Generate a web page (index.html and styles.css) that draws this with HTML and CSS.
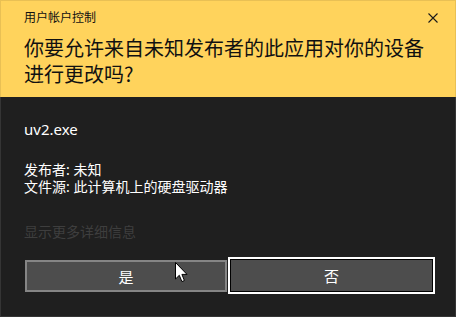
FILE: index.html
```html
<!DOCTYPE html>
<html lang="zh-CN">
<head>
<meta charset="utf-8">
<link rel="stylesheet" href="styles.css">
</head>
<body>
<div class="window">
  <header class="banner">
    <div class="titlebar">
      <span class="title">用户帐户控制</span>
      <svg class="close" width="10" height="10" viewBox="0 0 10 10"><path d="M0.5 0.5 L9.5 9.5 M9.5 0.5 L0.5 9.5" stroke="#1a1a1a" stroke-width="1.1" fill="none"/></svg>
    </div>
    <h1 class="question">你要允许来自未知发布者的此应用对你的设备进行更改吗?</h1>
  </header>
  <main class="content">
    <div class="app">uv2.exe</div>
    <div class="meta">
      <div>发布者: 未知</div>
      <div>文件源: 此计算机上的硬盘驱动器</div>
    </div>
    <div class="more">显示更多详细信息</div>
    <div class="actions">
      <button class="btn btn-yes">是</button>
      <button class="btn btn-no">否</button>
    </div>
    <svg class="cursor" width="13" height="21" viewBox="0 0 13 21"><path d="M0.5 0.5 V17 L4.3 13.3 L6.9 19.6 L9.4 18.5 L6.9 12.4 H12 Z" fill="#fff" stroke="#000" stroke-width="1" stroke-linejoin="miter"/></svg>
  </main>
</div>
</body>
</html>
```
FILE: styles.css
```css
* { box-sizing: border-box; }
html, body { margin: 0; padding: 0; }
body {
  width: 456px;
  height: 317px;
  overflow: hidden;
  background: #1f1f1f;
  font-family: "Noto Sans", "Noto Sans CJK SC", sans-serif;
}
.window {
  width: 456px;
  height: 317px;
  display: flex;
  flex-direction: column;
}
.banner {
  height: 97px;
  background: #ffd35c;
  border: 1px solid #e9c054;
  border-bottom: none;
  padding: 0 17px 0 23px;
  color: #111;
}
.titlebar {
  display: flex;
  justify-content: space-between;
  align-items: center;
  height: 32px;
}
.title {
  font-family: "Noto Sans CJK SC", sans-serif;
  font-size: 12px;
  line-height: 16px;
  margin-top: -1px;
}
.close { display: block; margin-top: 1px; }
.question {
  margin: 2px 0 0;
  font-family: "Noto Sans CJK SC", sans-serif;
  font-weight: normal;
  font-size: 20px;
  line-height: 26px;
  letter-spacing: 0;
}
.content {
  position: relative;
  flex: 1;
  border: 1px solid #353535;
  border-top: none;
  padding: 0 0 0 23px;
  color: #fff;
}
.app {
  margin-top: 22px;
  font-size: 15px;
  line-height: 20px;
}
.meta {
  margin-top: 22px;
  font-family: "Noto Sans", "Noto Sans CJK SC", sans-serif;
  font-size: 14px;
  line-height: 17px;
}
.more {
  margin-top: 28px;
  font-family: "Noto Sans CJK SC", sans-serif;
  font-size: 14px;
  line-height: 17px;
  color: #3e3e3e;
}
.actions {
  margin-top: 19px;
  display: flex;
  align-items: flex-end;
  gap: 2px;
}
.btn {
  margin: 0;
  padding: 0;
  font-family: "Noto Sans CJK SC", sans-serif;
  font-size: 15px;
  color: #fff;
  background: #4d4d4d;
}
.btn-yes {
  width: 202px;
  height: 32px;
  border: 2px solid #858585;
  margin-left: 1px;
}
.btn-no {
  width: 203px;
  height: 33px;
  border: 1px solid #000;
  outline: 2px solid #fff;
  margin-left: 1px;
}
.cursor {
  position: absolute;
  left: 174px;
  top: 165px;
}
```
